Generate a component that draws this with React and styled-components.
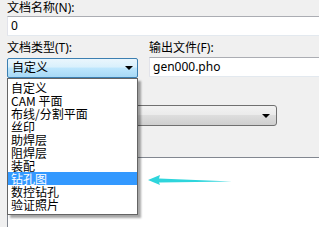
import React from 'react';
import styled, {createGlobalStyle} from 'styled-components';

const GlobalStyle = createGlobalStyle`
  html, body {
    margin: 0;
    padding: 0;
    background: #f0f0f0;
  }
  body {
    width: 319px;
    height: 227px;
    overflow: hidden;
    font-family: "Noto Sans", "Noto Sans CJK SC", sans-serif;
    font-size: 12px;
    color: #000;
  }
`

const types = ['自定义', 'CAM 平面', '布线/分割平面', '丝印', '助焊层', '阻焊层', '装配', '钻孔图', '数控钻孔', '验证照片'];

const App = () => {
  return (
    <Page>
      <GlobalStyle />
      <Label>文档名称(N):</Label>
      <TextBox>0</TextBox>
      <Row>
        <Field width="131px">
          <Label tall>文档类型(T):</Label>
          <Select>
            <span>自定义</span>
            <Arrow />
            <DropList>
              {types.map((t, i) => (
                <Item key={t} active={i === 7}>{t}</Item>
              ))}
            </DropList>
          </Select>
        </Field>
        <Field grow>
          <Label tall>输出文件(F):</Label>
          <TextBox>gen000.pho</TextBox>
        </Field>
      </Row>
      <Combo>
        <Arrow />
      </Combo>
      <Panel />
      <Pointer width="84" height="10" viewBox="0 0 84 10">
        <polygon points="0,5 12,0 11,3.5 84,6.5 11,7.5 12,10" fill="#2ed5dc" />
      </Pointer>
    </Page>
  )
}

export default App;

const Page = styled.div`
  position: relative;
  width: 319px;
  height: 227px;
  padding-left: 7px;
  box-sizing: border-box;
  display: flex;
  flex-direction: column;
`

const Label = styled.div`
  height: ${p => p.tall ? '16px' : '15px'};
  line-height: ${p => p.tall ? '16px' : '15px'};
  margin-top: ${p => p.tall ? '3px' : '0'};
  white-space: nowrap;
`

const TextBox = styled.div`
  height: 20px;
  margin-top: 1px;
  box-sizing: border-box;
  background: #fff;
  border-top: 1px solid #abadb3;
  border-left: 1px solid #e2e3ea;
  border-bottom: 1px solid #e3e9ef;
  padding-left: 3px;
  line-height: 18px;
  white-space: nowrap;
`

const Row = styled.div`
  display: flex;
  gap: 11px;
  margin-top: 1px;
`

const Field = styled.div`
  width: ${p => p.width || 'auto'};
  flex: ${p => p.grow ? '1' : 'none'};
  display: flex;
  flex-direction: column;
`

const Select = styled.div`
  position: relative;
  height: 20px;
  margin-top: 2px;
  box-sizing: border-box;
  border: 1px solid #3c7fb1;
  border-radius: 2px;
  background: linear-gradient(#eaf6fd 0%, #d9f0fc 45%, #bee6fd 50%, #a7d9f5 100%);
  padding-left: 4px;
  line-height: 18px;
  display: flex;
  align-items: center;
  justify-content: space-between;
  padding-right: 4px;
`

const Arrow = styled.div`
  width: 0;
  height: 0;
  border-left: 4px solid transparent;
  border-right: 4px solid transparent;
  border-top: 4px solid #000;
`

const DropList = styled.div`
  position: absolute;
  left: -1px;
  top: 19px;
  width: 131px;
  box-sizing: border-box;
  background: #fff;
  border: 1px solid #646464;
  padding: 2px 0 3px;
  box-shadow: 3px 3px 2px rgba(0, 0, 0, 0.35);
  z-index: 2;
`

const Item = styled.div`
  height: 13px;
  line-height: 13px;
  padding-left: 3px;
  background: ${p => p.active ? '#3399ff' : 'transparent'};
  color: ${p => p.active ? '#fff' : '#000'};
  font-family: "Noto Sans CJK SC", sans-serif;
  white-space: nowrap;
`

const Combo = styled.div`
  width: 270px;
  height: 21px;
  margin-top: 27px;
  box-sizing: border-box;
  border: 1px solid #707070;
  border-radius: 3px;
  background: linear-gradient(#f2f2f2 0%, #ebebeb 45%, #dddddd 50%, #cfcfcf 100%);
  display: flex;
  align-items: center;
  justify-content: flex-end;
  padding-right: 6px;
`

const Panel = styled.div`
  flex: 1;
  margin-top: 31px;
  background: #fff;
  border-top: 1px solid #828790;
  border-left: 1px solid #828790;
`

const Pointer = styled.svg`
  position: absolute;
  left: 148px;
  top: 175px;
`
